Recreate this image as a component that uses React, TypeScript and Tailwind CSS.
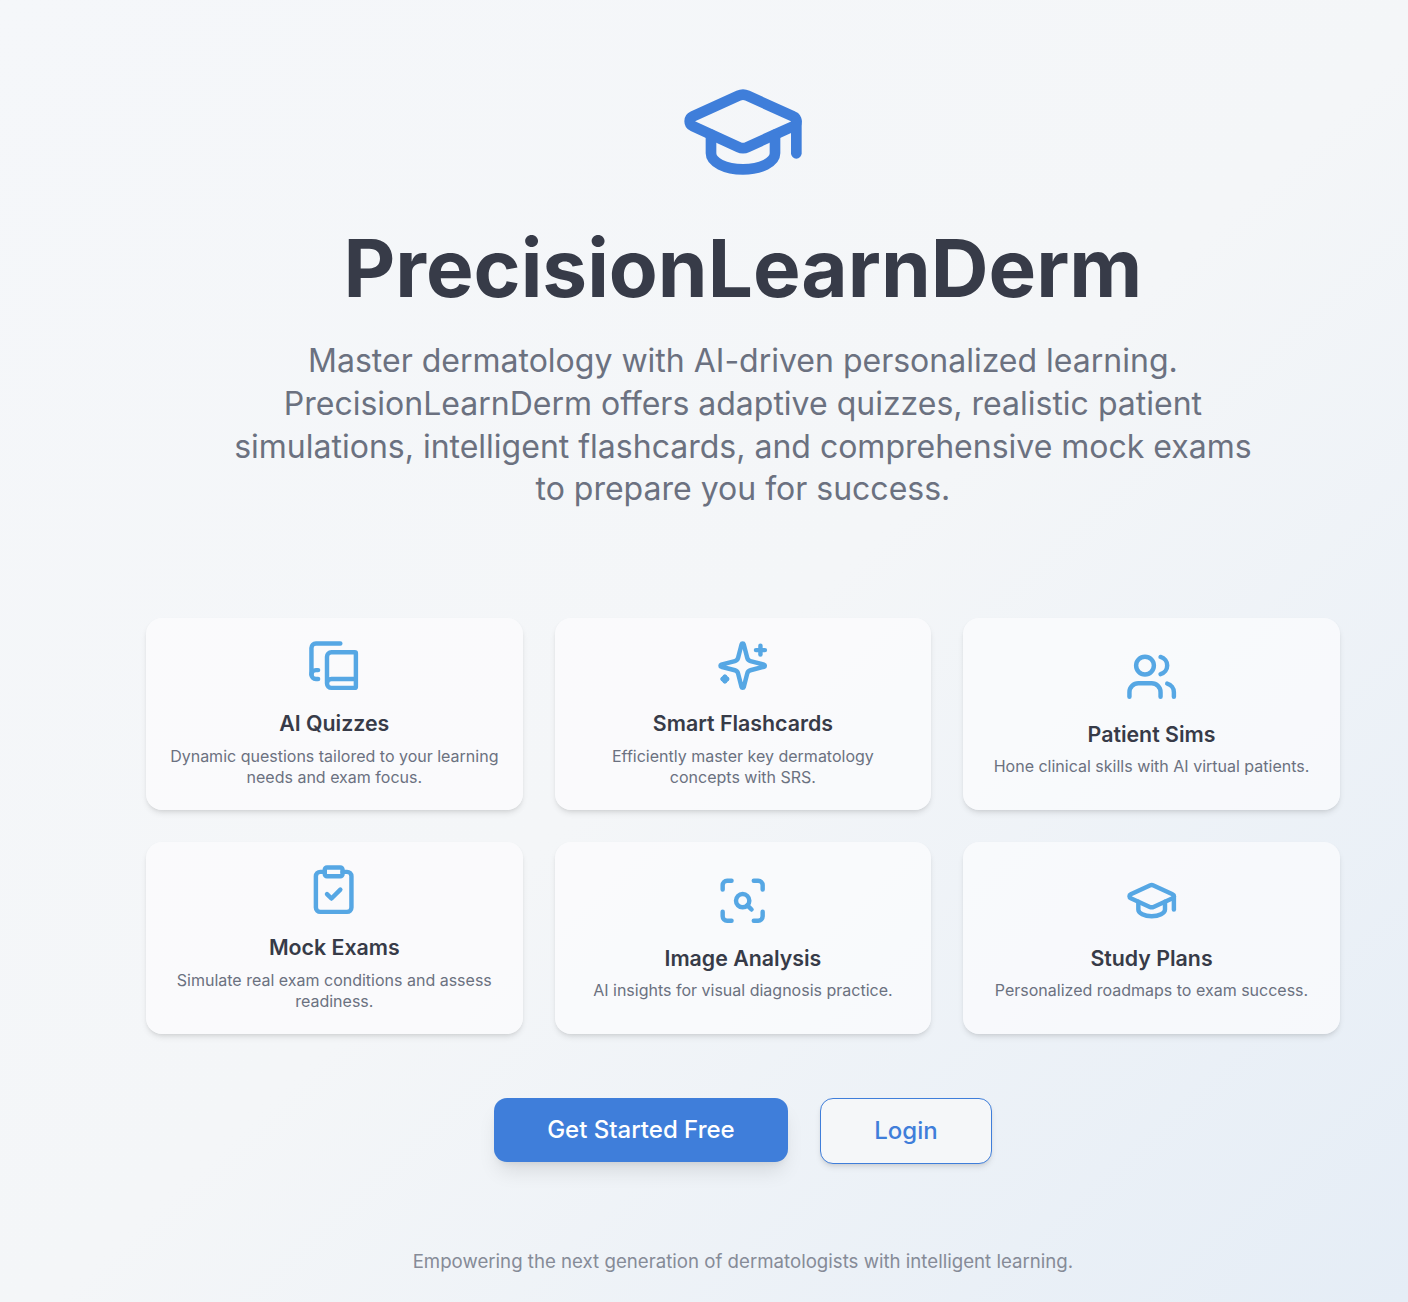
import React from "react";
import { ClipboardCheck, GraduationCap, ScanSearch, Users } from "lucide-react";

type IconProps = { className?: string };
type Feature = { icon: React.ComponentType<IconProps>; title: string; text: string };

function StrokeIcon({ className, paths }: IconProps & { paths: string[] }) {
  return (
    <svg
      viewBox="0 0 24 24"
      fill="none"
      stroke="currentColor"
      strokeWidth={2}
      strokeLinecap="round"
      strokeLinejoin="round"
      className={className}
    >
      {paths.map((d) => (
        <path key={d} d={d} />
      ))}
    </svg>
  );
}

function BooksIcon({ className }: IconProps) {
  return (
    <StrokeIcon
      className={className}
      paths={[
        "M2 16V4a2 2 0 0 1 2-2h11",
        "M22 18H11a2 2 0 1 0 0 4h10.5a.5.5 0 0 0 .5-.5v-15a.5.5 0 0 0-.5-.5H11a2 2 0 0 0-2 2v12",
        "M5 14H4a2 2 0 1 0 0 4h1",
      ]}
    />
  );
}

function SparklesIcon({ className }: IconProps) {
  return (
    <StrokeIcon
      className={className}
      paths={[
        "M9.937 15.5A2 2 0 0 0 8.5 14.063l-6.135-1.582a.5.5 0 0 1 0-.962L8.5 9.936A2 2 0 0 0 9.937 8.5l1.582-6.135a.5.5 0 0 1 .963 0L14.063 8.5A2 2 0 0 0 15.5 9.937l6.135 1.581a.5.5 0 0 1 0 .964L15.5 14.063a2 2 0 0 0-1.437 1.437l-1.582 6.135a.5.5 0 0 1-.963 0z",
        "M20 3v4",
        "M22 5h-4",
        "M4 17v2",
        "M5 18H3",
        "M4 17l1 1-1 1-1-1z",
      ]}
    />
  );
}

const features: Feature[] = [
  { icon: BooksIcon, title: "AI Quizzes", text: "Dynamic questions tailored to your learning needs and exam focus." },
  { icon: SparklesIcon, title: "Smart Flashcards", text: "Efficiently master key dermatology concepts with SRS." },
  { icon: Users, title: "Patient Sims", text: "Hone clinical skills with AI virtual patients." },
  { icon: ClipboardCheck, title: "Mock Exams", text: "Simulate real exam conditions and assess readiness." },
  { icon: ScanSearch, title: "Image Analysis", text: "AI insights for visual diagnosis practice." },
  { icon: GraduationCap, title: "Study Plans", text: "Personalized roadmaps to exam success." },
];

function FeatureCard({ icon: Icon, title, text }: Feature) {
  return (
    <div className="flex h-48 flex-col items-center justify-center rounded-2xl bg-[#fcfcfd]/70 px-[21px] text-center shadow-md">
      <Icon className="mr-[0.5px] mb-[14.8px] size-[53.33px] shrink-0 text-[#56a7e4]" />
      <h3 className="mb-[6.5px] text-[21.33px] leading-8 font-semibold text-[#373b48]">{title}</h3>
      <p className="text-base leading-[21.33px] text-[#6b7180]">{text}</p>
    </div>
  );
}

export default function App() {
  return (
    <div className="flex min-h-[1302px] justify-center bg-linear-to-br from-[#f5f7fa] via-[#f4f6f8] via-52% to-[#e5edf6] to-100% pt-[68.33px] pr-[68.2px] pl-[146px] font-['Inter',sans-serif]">
      <main className="flex w-full flex-col items-center">
        <GraduationCap className="mb-8 size-32 text-[#3f7eda]" />
        <h1 className="mb-8 text-[80px] leading-[80px] font-bold text-[#373b48]">PrecisionLearnDerm</h1>
        <p className="mb-[106.67px] w-[1024px] text-center text-[32px] leading-[42.67px] text-[#6b7180]">
          Master dermatology with AI-driven personalized learning. PrecisionLearnDerm offers adaptive
          quizzes, realistic patient simulations, intelligent flashcards, and comprehensive mock exams to
          prepare you for success.
        </p>
        <section className="mb-16 grid w-full grid-cols-3 gap-8">
          {features.map((f) => (
            <FeatureCard key={f.title} {...f} />
          ))}
        </section>
        <div className="mb-[85px] flex items-start gap-8">
          <button className="h-16 w-[294px] rounded-[13px] bg-[#3f7eda] text-2xl font-medium text-white shadow-[0_13px_20px_-4px_rgb(0_0_0/0.1),0_5px_8px_-5px_rgb(0_0_0/0.1)]">
            Get Started Free
          </button>
          <button className="h-[66px] w-[172px] rounded-[13px] border border-[#3f7eda] bg-[#f5f7f9] text-2xl font-medium text-[#3f7eda] shadow-md">
            Login
          </button>
        </div>
        <p className="text-[18.67px] leading-[26.67px] text-[#868b97]">
          Empowering the next generation of dermatologists with intelligent learning.
        </p>
      </main>
    </div>
  );
}
